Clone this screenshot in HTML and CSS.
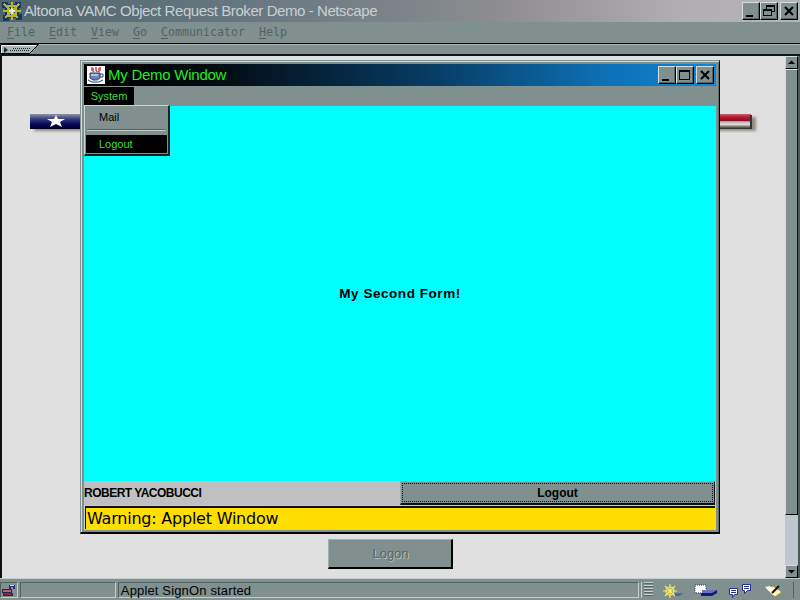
FILE: index.html
```
<!DOCTYPE html>
<html lang="en">
<head>
<meta charset="utf-8">
<title>Altoona VAMC Object Request Broker Demo - Netscape</title>
<link rel="stylesheet" href="styles.css">
</head>
<body>
<div class="browser">
  <header class="titlebar">
    <svg class="ship" width="20" height="20" viewBox="0 0 20 20" shape-rendering="crispEdges"><path fill="#123a65" d="M0 1h6v2h7V1h6v6h-2v6h3v6h-6v-2H7v3H1v-6h2V7H0z"/><path fill="none" stroke="#bdb526" stroke-width="2" d="M2 3l14 14M17 3L3 17M10 1v18M1 10h18M6 5h8v10H6z"/><path fill="#e9eed5" d="M10 6l1 3 4 1-4 1-1 4-1-4-4-1 4-1z"/></svg>
    <span class="title-text">Altoona VAMC Object Request Broker Demo - Netscape</span>
    <div class="controls">
      <span class="ctl"><svg width="16" height="16" viewBox="0 0 16 16"><path d="M3 12h7v2H3z"/></svg></span>
      <span class="ctl"><svg width="16" height="16" viewBox="0 0 16 16" shape-rendering="crispEdges"><path fill="none" stroke="#000" d="M5.500 6V2.500h8v6H11M5 3.500h9M2.500 6.500h8v6h-8zM2 7.500h9"/></svg></span>
      <span class="ctl close"><svg width="16" height="16" viewBox="0 0 16 16"><path fill="none" stroke="#000" stroke-width="2" d="M4 4l8 8M12 4l-8 8"/></svg></span>
    </div>
  </header>
  <nav class="menus"><span><u>F</u>ile</span><span><u>E</u>dit</span><span><u>V</u>iew</span><span><u>G</u>o</span><span><u>C</u>ommunicator</span><span><u>H</u>elp</span></nav>
  <div class="toolbar"><svg width="40" height="11" viewBox="0 0 40 11"><path fill="#a9b6b5" stroke="#000" d="M.5.5h38l-9 9H.5z"/><path fill="none" stroke="#eef4f4" d="M1.500 9V1.500H36"/><path fill="#172b3b" d="M4 3l4 3-4 3z"/><path stroke="#172b3b" stroke-dasharray="1 1" d="M10 6.500h19M13 4.500h17"/></svg></div>
  <div class="viewport">
    <main class="page">
      <svg class="flag" width="730" height="26" viewBox="0 0 730 26">
        <defs>
          <linearGradient id="blue" x2="0" y2="1"><stop stop-color="#8d91aa"/><stop offset=".35" stop-color="#31397c"/><stop offset=".7" stop-color="#04085a"/><stop offset="1" stop-color="#00001e"/></linearGradient>
          <linearGradient id="stripes" x2="0" y2="1"><stop stop-color="#bd6870"/><stop offset=".2" stop-color="#bd1834"/><stop offset=".48" stop-color="#800f20"/><stop offset=".5" stop-color="#aaa19d"/><stop offset=".68" stop-color="#e8e5e1"/><stop offset=".85" stop-color="#77706b"/><stop offset="1" stop-color="#242424"/></linearGradient>
          <filter id="soft"><feGaussianBlur stdDeviation="1.500"/></filter>
        </defs>
        <path fill="#776e59" opacity=".75" filter="url(#soft)" d="M4 5h722v14H4z"/>
        <path fill="url(#blue)" d="M0 2h230v15H0z"/><path fill="url(#stripes)" d="M230 2h491v15H230z"/><path fill="#333" d="M720 3h2v14h-2z"/>
        <path fill="#fff" d="M26 3l2 4h7l-5 3 2 5-6-3-6 3 2-5-5-3h7z"/>
      </svg>
      <button class="logon" disabled>Logon</button>
    </main>
    <aside class="scroll"><span class="arrow"><svg width="11" height="11"><path d="M2 7h7L5.500 3.500z"/></svg></span><span class="thumb"></span><span class="track"></span><span class="arrow"><svg width="11" height="11"><path d="M2 4h7L5.500 7.500z"/></svg></span></aside>
  </div>
  <footer class="status">
    <span class="cell lock"><svg width="16" height="15" viewBox="0 0 16 15" shape-rendering="crispEdges"><path fill="none" stroke="#322d78" stroke-width="2" d="M9 6V3h4v3"/><path fill="#292256" d="M1 6h10l1 7H2z"/><path fill="#bd6074" d="M2 7h8v2H2z"/><path fill="#8e2038" d="M3 10h8v2H3z"/><path fill="#d6c9ff" d="M9 2h4v1H9z"/></svg></span>
    <span class="cell progress"></span>
    <span class="cell message">Applet SignOn started</span>
    <span class="components">
      <i class="grip"></i>
      <svg width="132" height="16" viewBox="0 0 132 16"><g transform="translate(-3 1)"><g fill="none" stroke="#f3eb60" stroke-width="1.200"><circle cx="12" cy="8" r="4"/><path d="M12 1v14M5 8h14M7 3l10 10M17 3L7 13"/></g><path fill="#5367a8" d="M17 10h8l-3 3h-5z"/><path fill="#fff" stroke="#283268" stroke-dasharray="1 1" d="M37 2h11v8H37z"/><path fill="#6973bd" d="M44 7h16l-4 3H44z"/><path fill="#121c70" d="M43 10h11l5-3v3l-5 3H43z"/><path fill="#fff" stroke="#23308f" d="M71.500 5.500h8v6h-3l-2 3v-3h-3zM84.500 1.500h8v6h-3l-3 3v-3h-2z"/><path stroke="#23308f" d="M73 7.500h5M73 9.500h5M86 3.500h5M86 5.500h5"/><path fill="#fff1aa" stroke="#746d32" stroke-width=".6" d="M107 5l8-2 9 6-7 5z"/><path fill="#fff" d="M107 4l5-1 5 8-2 1z"/><path stroke="#111" stroke-width="2" d="M114 10l7-7"/></g></svg>
    </span>
  </footer>
</div>

<section class="applet">
  <header class="applet-title">
    <svg width="18" height="18" viewBox="0 0 18 18"><path fill="#fff" d="M0 0h18v18H0z"/><path fill="none" stroke="#d03c4c" stroke-width="1.500" d="M5 1v3l2 2M9 1v3l1 2M13 1v3l-2 2M5 3h2M11 3h2"/><path fill="#6e85ad" stroke="#283f7d" d="M3 7h10v5l-3 2H6l-3-2z"/><path fill="none" stroke="#283f7d" d="M13 8h3v3h-3M1 14l4 2h7l4-2"/><path stroke="#fff" d="M4 9h7"/></svg>
    <span class="applet-name">My Demo Window</span>
    <div class="controls">
      <span class="ctl"><svg width="16" height="16" viewBox="0 0 16 16"><path d="M3 12h7v2H3z"/></svg></span>
      <span class="ctl"><svg width="16" height="16" viewBox="0 0 16 16" shape-rendering="crispEdges"><path fill="none" stroke="#000" d="M2.500 3.500h10v9h-10zM2 4.500h11"/></svg></span>
      <span class="ctl close"><svg width="16" height="16" viewBox="0 0 16 16"><path fill="none" stroke="#000" stroke-width="2" d="M4 4l8 8M12 4l-8 8"/></svg></span>
    </div>
  </header>
  <nav class="applet-menu"><span class="system">System</span></nav>
  <div class="form"><b>My Second Form!</b>
    <div class="dropdown"><span class="item">Mail</span><hr><span class="item selected">Logout</span></div>
  </div>
  <div class="bottom"><b class="user">ROBERT YACOBUCCI</b><button class="logout"><span>Logout</span></button></div>
  <div class="warning"><span>Warning: Applet Window</span></div>
</section>
</body>
</html>
```
FILE: styles.css
```
* { box-sizing: border-box; }
body { margin: 0; width: 800px; height: 600px; overflow: hidden; font-family: "Liberation Sans", sans-serif; color: #000; }
svg { display: block; flex: none; }
button { font-family: inherit; border-radius: 0; padding: 0; }
.browser { width: 800px; height: 600px; display: flex; flex-direction: column; background: #7f908e; }
.titlebar { height: 22px; flex: none; display: flex; align-items: center; padding: 0 2px; background: linear-gradient(90deg, #50646b 0, #667780 30%, #81868b 54%, #929092 65%, #b1aeb2 85%, #b7b4b8 100%); }
.title-text { margin-left: 2px; font: 15px/22px "Liberation Sans", sans-serif; letter-spacing: -.42px; color: #c9d0d2; white-space: nowrap; }
.controls { margin-left: auto; display: flex; }
.ctl { width: 18px; height: 18px; background: #7f908e; border: 1px solid; border-color: #d3dedd #000 #000 #d3dedd; box-shadow: inset -1px -1px #536462; }
.ctl.close { margin-left: 2px; }
.menus { height: 21px; flex: none; display: flex; gap: 14px; padding: 3px 7px; font: 11.63px/15px "DejaVu Sans Mono", monospace; color: #4e6463; }
.menus u { text-underline-offset: 2px; }
.toolbar { height: 13px; flex: none; border-top: 1px solid #000; border-bottom: 2px solid #101817; box-shadow: inset 0 1px #a7b3b2; }
.viewport { flex: 1; min-height: 0; display: flex; border-left: 2px solid #111; background: #e0e0e0; }
.page { flex: 1; display: flex; flex-direction: column; align-items: flex-start; padding: 56px 0 0 28px; }
.flag { margin-right: -10px; }
.logon { width: 125px; height: 30px; margin: 401px 0 0 298px; background: #7f908e; border: solid; border-width: 1px 2px 2px 1px; border-color: #a0aeac #000 #000 #a0aeac; color: #536765; font-size: 13px; text-indent: 1px; text-shadow: 1px 1px #b4c2c0; }
.scroll { width: 15px; display: flex; flex-direction: column; background: #c0c7ce; border-right: 2px solid #4c5958; }
.arrow { width: 13px; height: 13px; flex: none; background: #7f908e; border: 1px solid; border-color: #d1dcdb #000 #000 #d1dcdb; }
.thumb { height: 446px; flex: none; background: #7f908e; border: 1px solid; border-color: #d1dcdb #111 #000 #d1dcdb; }
.track { flex: 1; }
.status { height: 22px; flex: none; display: flex; gap: 2px; padding: 3px 0 2px; border-top: 1px solid #c4cecc; background: #7f908e; }
.cell { border: 1px solid; border-color: #506260 #c4cecc #c4cecc #506260; }
.lock { width: 18px; }
.progress { width: 96px; }
.message { width: 522px; padding-left: 2px; font-size: 13px; line-height: 16px; letter-spacing: .15px; }
.components { display: flex; flex: 1; margin-right: 6px; border-left: 1px solid #c4cecc; border-right: 1px solid #506260; }
.grip { width: 9px; height: 15px; margin: 0 8px 0 2px; background: repeating-linear-gradient(#c7d1d0 0 1px, #566765 1px 2px, #7f908e 2px 3px); }
.applet { position: absolute; left: 80px; top: 60px; width: 640px; height: 474px; padding: 2px; border: solid; border-width: 1px 1px 2px; border-color: #829492 #000 #000 #829492; background: #7f908e; box-shadow: inset 1px 1px #d1dcda, inset -1px 0 #5d6e6c; display: flex; flex-direction: column; }
.applet > * { margin-left: 1px; margin-right: 1px; }
.applet-title { height: 22px; margin-top: 1px; flex: none; display: flex; align-items: center; padding: 0 2px 0 3px; background: linear-gradient(90deg, #000 0, #020a10 20%, #073c63 55%, #0d70b4 82%, #1185d6); }
.applet-name { margin-left: 3px; font: 15px/20px "Liberation Sans", sans-serif; letter-spacing: -.25px; color: #25eb25; }
.applet-menu { height: 20px; flex: none; display: flex; }
.system { width: 50px; height: 18px; margin-top: 1px; background: #000; color: #42dd42; font-size: 11px; line-height: 18px; text-align: center; }
.form { position: relative; height: 375px; flex: none; display: flex; justify-content: center; align-items: center; background: #0ff; font-size: 13.5px; letter-spacing: .55px; }
.dropdown { position: absolute; left: 0; top: -1px; width: 86px; height: 51px; padding: 1px; background: #7f908e; border: solid; border-width: 1px 2px 2px 1px; border-color: #c9d3d2 #142020 #142020 #c9d3d2; font-size: 11px; letter-spacing: 0; }
.item { display: block; height: 20px; padding-left: 13px; line-height: 20px; }
.dropdown hr { height: 2px; margin: 2px 1px 4px; border: 0; border-top: 1px solid #506260; background: #c4cecc; }
.selected { height: 18px; line-height: 18px; background: #000; color: #42dd42; }
.bottom { height: 24px; flex: none; display: flex; background: #c0c0c0; }
.user { width: 316px; font-size: 12px; line-height: 24px; letter-spacing: -.5px; white-space: nowrap; }
.logout { width: 315px; height: 24px; padding: 1px; background: #7f908e; border: solid; border-width: 1px 1px 2px 1px; border-color: #9caaa8 #111 #111 #9caaa8; font-size: 12px; font-weight: bold; color: #000; }
.logout span { display: block; height: 19px; line-height: 18px; border: 1px dotted #111; }
.warning { height: 25px; flex: none; border: 1px solid #c8d0ce; background: #ffdf00; }
.warning span { display: block; height: 23px; padding-left: 1px; border: solid #111; border-width: 2px 0 0 1px; font: 16px/21px "DejaVu Sans", sans-serif; letter-spacing: -.22px; }
```
